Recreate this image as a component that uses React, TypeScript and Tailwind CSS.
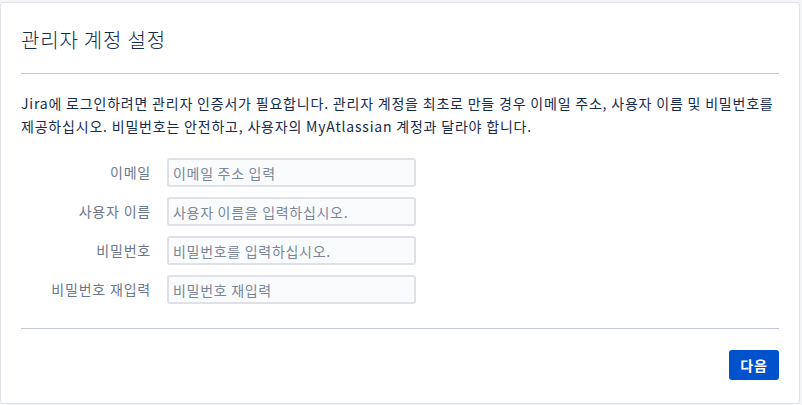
const FONT = "font-['Segoe_UI','Noto_Sans_CJK_KR','Noto_Sans',sans-serif]";

const fields = [
  { label: '이메일', placeholder: '이메일 주소 입력', type: 'email' },
  { label: '사용자 이름', placeholder: '사용자 이름을 입력하십시오.', type: 'text' },
  { label: '비밀번호', placeholder: '비밀번호를 입력하십시오.', type: 'password' },
  { label: '비밀번호 재입력', placeholder: '비밀번호 재입력', type: 'password' },
];

export default function App() {
  return (
    <div className={`h-[405px] w-[802px] bg-[#f4f5f7] pt-[2px] pr-[2px] pb-[1px] tracking-[0.05em] ${FONT}`}>
      <div className="flex h-full flex-col rounded-[3px] border border-[#dfe1e6] bg-white text-[#172b4d]">
        <div className="px-[20px] pt-[23px] pb-[19px]">
          <h1 className="text-[20px] leading-[28px] font-light">관리자 계정 설정</h1>
        </div>
        <div className="mx-[20px] border-t border-[#c1c7d0]" />

        <p className="mx-[20px] mt-[18px] text-[14px] leading-[23px] whitespace-nowrap">
          Jira에 로그인하려면 관리자 인증서가 필요합니다. 관리자 계정을 최초로 만들 경우 이메일 주소, 사용자 이름 및 비밀번호를
          <br />
          제공하십시오. 비밀번호는 안전하고, 사용자의 MyAtlassian 계정과 달라야 합니다.
        </p>

        <form className="mx-[20px] mt-[20px] flex flex-col gap-[10px]">
          {fields.map((f) => (
            <div key={f.label} className="flex items-center gap-[16px]">
              <label className="w-[130px] text-right text-[14px] text-[#6b778c]">{f.label}</label>
              <input
                type="text"
                placeholder={f.placeholder}
                className="h-[29px] w-[249px] rounded-[3px] border-2 border-[#dfe1e6] bg-[#fafbfc] px-[4px] text-[14px] tracking-[0.05em] text-[#172b4d] outline-none placeholder:text-[#7a869a]"
              />
            </div>
          ))}
        </form>

        <div className="mx-[20px] mt-[24px] border-t border-[#c1c7d0]" />

        <div className="mx-[20px] mt-[21px] flex justify-end">
          <button
            type="button"
            className="h-[30px] w-[50px] rounded-[3px] bg-[#0052cc] text-[14px] font-semibold text-white"
          >
            다음
          </button>
        </div>
      </div>
    </div>
  );
}
